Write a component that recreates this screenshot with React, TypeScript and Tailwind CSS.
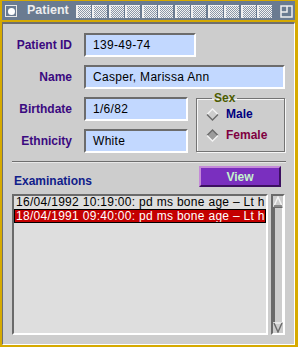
import React from "react";

const rows = [
  { text: "16/04/1992 10:19:00: pd ms bone age – Lt h", selected: false },
  { text: "18/04/1991 09:40:00: pd ms bone age – Lt h", selected: true },
];

const Diamond = ({ checked }: { checked?: boolean }) => (
  <svg width="13" height="13" viewBox="0 0 13 13" className="shrink-0">
    <polygon points="6.5,1 12,6.5 6.5,12 1,6.5" fill={checked ? "#9c9c9c" : "none"} />
    <polyline points="1,6.5 6.5,1 12,6.5" fill="none" stroke={checked ? "#6a6a6a" : "#f4f4f4"} strokeWidth="1.4" />
    <polyline points="1,6.5 6.5,12 12,6.5" fill="none" stroke={checked ? "#f4f4f4" : "#6a6a6a"} strokeWidth="1.4" />
  </svg>
);

const Field = ({ label, value, width }: { label: string; value: string; width: string }) => (
  <div className="flex items-center">
    <label className="ml-[11px] w-[58px] text-right text-[12px] font-bold text-[#3b0a80] whitespace-nowrap">
      {label}
    </label>
    <div
      className={`ml-[12px] h-[24px] ${width} flex items-center pl-[7px] bg-[#c2d8ff] border-2 border-t-[#6c6c6c] border-l-[#6c6c6c] border-r-white border-b-white text-[12px] tracking-[0.3px] text-black`}
    >
      {value}
    </div>
  </div>
);

export default function App() {
  return (
    <div className="w-[298px] h-[347px] bg-[#d6aa00] pl-[2px] pr-[3px] pt-[1px] pb-[2px] flex flex-col font-['Liberation_Sans',Arial,sans-serif] overflow-hidden">
      {/* title bar */}
      <div className="h-[19px] bg-[#6a7b91] flex items-start shrink-0">
        <div className="ml-[3px] mt-[4px] w-[12px] h-[12px] border border-[#e8e8e8] bg-[#6a7b91] flex items-center justify-center">
          <div className="w-[7px] h-[7px] rounded-full bg-white" />
        </div>
        <span className="ml-[10px] mt-[2px] w-[41px] text-[12.5px] leading-[15px] font-bold text-[#eeeeee] whitespace-nowrap">
          Patient
        </span>
        <div className="ml-[8px] mt-[4px] w-[196px] flex justify-between">
          {Array.from({ length: 12 }).map((_, i) => (
            <div
              key={i}
              className="w-[15px] h-[13px] border-l-2 border-t border-[#f0f0f0] bg-[repeating-conic-gradient(#f2f2f2_0_25%,#8a97a8_0_50%)] bg-[length:2px_2px]"
            />
          ))}
        </div>
        <svg width="13" height="13" viewBox="0 0 13 13" className="ml-[8px] mt-[4px]">
          <rect x="1" y="1" width="11" height="11" fill="none" stroke="#f0f0f0" strokeWidth="1.5" />
          <polyline points="7,1 7,7 1,7" fill="none" stroke="#f0f0f0" strokeWidth="1.5" />
        </svg>
      </div>

      {/* window body */}
      <div className="mt-[2px] flex-1 flex flex-col bg-[#cdcdcd] border-t-2 border-l border-t-[#6e6e6e] border-l-[#6e6e6e] border-r border-b border-r-white border-b-white pt-[9px]">
        <Field label="Patient ID" value="139-49-74" width="w-[112px]" />
        <div className="mt-[8px]">
          <Field label="Name" value="Casper, Marissa Ann" width="w-[201px]" />
        </div>

        <div className="mt-[8px] flex items-start">
          <div className="flex flex-col gap-[8px]">
            <Field label="Birthdate" value="1/6/82" width="w-[104px]" />
            <Field label="Ethnicity" value="White" width="w-[104px]" />
          </div>
          <fieldset className="ml-[8px] -mt-[6px] w-[89px] h-[61px] border border-[#737373] shadow-[1px_1px_0_#f6f6f6,inset_1px_1px_0_#f6f6f6] pl-[9px]">
            <legend className="ml-[6px] px-[2px] text-[12px] leading-[14px] font-bold text-[#4c5c00]">Sex</legend>
            <div className="mt-[2px] flex items-center gap-[7px] h-[14px]">
              <Diamond />
              <span className="text-[12px] font-bold text-[#000080]">Male</span>
            </div>
            <div className="mt-[7px] flex items-center gap-[7px] h-[14px]">
              <Diamond checked />
              <span className="text-[12px] font-bold text-[#800040]">Female</span>
            </div>
          </fieldset>
        </div>

        <div className="mt-[8px] ml-[9px] w-[274px] h-[2px] border-t border-[#6e6e6e] border-b border-b-[#e8e8e8]" />

        <div className="mt-[3px] flex items-start">
          <span className="ml-[11px] mt-[8px] text-[12px] leading-[14px] font-bold text-[#10208a]">Examinations</span>
          <button className="ml-auto mr-[13px] w-[82px] h-[21px] bg-[#7a2fbf] border-2 border-t-[#c48ad8] border-l-[#c48ad8] border-r-[#3c1060] border-b-[#3c1060] text-[12px] font-bold text-[#c4f4cc]">
            View
          </button>
        </div>

        <div className="mt-[6px] mb-[9px] flex-1 flex ml-[9px]">
          <div className="w-[256px] bg-[#dedede] border-2 border-t-[#6a6a6a] border-l-[#6a6a6a] border-r-white border-b-white overflow-hidden">
            {rows.map((r) => (
              <div
                key={r.text}
                className={
                  r.selected
                    ? "h-[14px] leading-[12px] pl-[1px] bg-[#c40000] border border-black text-white text-[12px] tracking-[0.3px] whitespace-nowrap overflow-hidden"
                    : "h-[13px] leading-[13px] pl-[2px] text-black text-[12px] tracking-[0.3px] whitespace-nowrap overflow-hidden"
                }
              >
                {r.text}
              </div>
            ))}
          </div>
          <div className="ml-[3px] w-[14px] flex flex-col bg-[#cdcdcd] border-2 border-t-[#6a6a6a] border-l-[#6a6a6a] border-r-white border-b-white">
            <svg width="10" height="11" viewBox="0 0 10 11" className="shrink-0">
              <polyline points="1,10 5,1 9,10" fill="none" stroke="#f4f4f4" strokeWidth="1.4" />
              <line x1="1" y1="10" x2="9" y2="10" stroke="#6a6a6a" strokeWidth="1.4" />
            </svg>
            <div className="flex-1 border-l-2 border-t border-l-[#6a6a6a] border-t-[#6a6a6a] border-r border-r-white bg-[#cdcdcd]" />
            <svg width="10" height="11" viewBox="0 0 10 11" className="shrink-0">
              <line x1="1" y1="1" x2="9" y2="1" stroke="#f4f4f4" strokeWidth="1.4" />
              <polyline points="1,1 5,10 9,1" fill="none" stroke="#6a6a6a" strokeWidth="1.4" />
            </svg>
          </div>
        </div>
      </div>
    </div>
  );
}
